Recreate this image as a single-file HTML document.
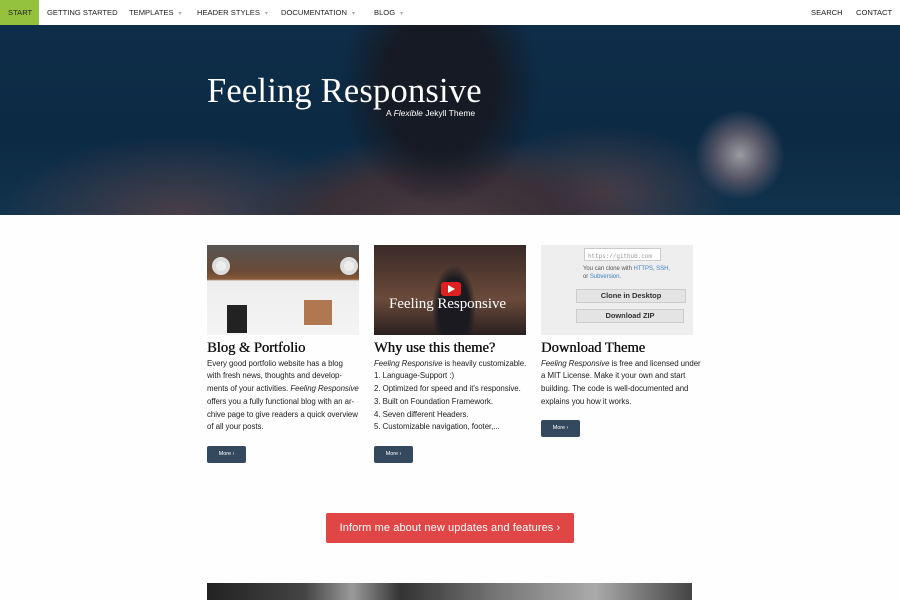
<!DOCTYPE html>
<html><head><meta charset="utf-8"><style>
*{margin:0;padding:0;box-sizing:border-box}
body{width:900px;height:600px;overflow:hidden;background:#fefefe;font-family:"Liberation Sans",sans-serif;color:#222;position:relative}
.nav{position:absolute;top:0;left:0;width:900px;height:25px;background:#fff;font-size:7.6px;}
.nav .it{position:absolute;top:8px;color:#222;white-space:nowrap}
.nav .start{left:0;top:0;width:39px;height:25px;background:#94c23c;padding:8px 0 0 8px}
.caret{color:#aaa;font-size:6px;margin-left:5px}
.hero{position:absolute;top:25px;left:0;width:900px;height:190px;overflow:hidden;
background:
radial-gradient(ellipse 100px 120px at 440px 60px,#161a24 55%,transparent 100%),
radial-gradient(ellipse 200px 90px at 440px 200px,#4a3a40 0%,#3a3038 60%,transparent 100%),
radial-gradient(ellipse 60px 60px at 740px 130px,#9a9aa0 0%,#556 40%,transparent 75%),
radial-gradient(ellipse 180px 80px at 180px 190px,#4a3e48 0%,transparent 100%),
radial-gradient(ellipse 130px 70px at 600px 170px,#4a3e48 0%,transparent 100%),
linear-gradient(#0e2d48,#0c2a44 60%,#11334d)}
.hero h1{position:absolute;left:207px;top:47px;font-family:"Liberation Serif",serif;font-weight:normal;font-size:34.5px;color:#fff;letter-spacing:0.2px}
.hero .sub{position:absolute;left:386px;top:83px;font-size:8.5px;color:#fff}
.card{position:absolute;top:245px;width:152px;font-size:7.9px;line-height:12.7px;letter-spacing:-0.05px}
.img{height:90px;width:152px}
.card h2{font-family:"Liberation Serif",serif;font-size:14.5px;font-weight:normal;text-shadow:0.4px 0 0 #111;margin:7px 0 3px;color:#111;letter-spacing:0}
.btn{display:inline-block;background:#34495e;color:#fff;font-size:5.5px;width:39px;height:17px;line-height:17px;text-align:center;border-radius:2px;position:absolute;left:0}
.red{position:absolute;left:326px;top:513px;width:248px;height:30px;background:#e04646;border-radius:2px;color:#fff;font-size:11px;text-align:center;line-height:30px;letter-spacing:0.1px}
.bottom{position:absolute;left:207px;top:583px;width:485px;height:17px;background:linear-gradient(90deg,#222 0%,#444 20%,#999 30%,#333 40%,#777 60%,#aaa 80%,#444 100%)}
</style></head><body>
<div class="nav">
<span class="it start">START</span>
<span class="it" style="left:47px">GETTING STARTED</span>
<span class="it" style="left:129px">TEMPLATES<span class="caret">▾</span></span>
<span class="it" style="left:197px">HEADER STYLES<span class="caret">▾</span></span>
<span class="it" style="left:281px">DOCUMENTATION<span class="caret">▾</span></span>
<span class="it" style="left:374px">BLOG<span class="caret">▾</span></span>
<span class="it" style="left:811px">SEARCH</span>
<span class="it" style="left:856px">CONTACT</span>
</div>
<div class="hero"><h1>Feeling Responsive</h1><div class="sub">A <i>Flexible</i> Jekyll Theme</div></div>

<div class="card" style="left:207px">
<div class="img" style="background:linear-gradient(180deg,#555 0%,#6b4a35 30%,#8a5a3a 38%,#eee 40%,#f4f4f4 100%);position:relative">
<div style="position:absolute;left:20px;top:60px;width:20px;height:28px;background:#222"></div>
<div style="position:absolute;left:97px;top:55px;width:28px;height:25px;background:#b07850"></div>
<div style="position:absolute;left:5px;top:12px;width:18px;height:18px;border-radius:50%;background:#eee;border:4px solid #ddd"></div>
<div style="position:absolute;left:133px;top:12px;width:18px;height:18px;border-radius:50%;background:#eee;border:4px solid #ddd"></div>
</div>
<h2>Blog &amp; Portfolio</h2>
<p>Every good portfolio website has a blog<br>with fresh news, thoughts and develop-<br>ments of your activities. <i>Feeling Responsive</i><br>offers you a fully functional blog with an ar-<br>chive page to give readers a quick overview<br>of all your posts.</p>
<span class="btn" style="top:201px">More ›</span>
</div>

<div class="card" style="left:374px">
<div class="img" style="background:radial-gradient(ellipse 22px 45px at 80px 65px,#1a1a20 70%,transparent 100%),linear-gradient(#3a2a28,#6a4a3a 60%,#2a2020);position:relative">
<div style="position:absolute;left:67px;top:37px;width:20px;height:14px;background:#e02020;border-radius:3px"></div>
<div style="position:absolute;left:74px;top:40px;width:0;height:0;border-left:7px solid #fff;border-top:4px solid transparent;border-bottom:4px solid transparent"></div>
<div style="position:absolute;left:15px;top:53px;color:#fff;font-family:'Liberation Serif',serif;font-size:15px">Feeling Responsive</div>
</div>
<h2>Why use this theme?</h2>
<p style="white-space:nowrap"><i>Feeling Responsive</i> is heavily customizable.<br>1. Language-Support :)<br>2. Optimized for speed and it's responsive.<br>3. Built on Foundation Framework.<br>4. Seven different Headers.<br>5. Customizable navigation, footer,...</p>
<span class="btn" style="top:201px">More ›</span>
</div>

<div class="card" style="left:541px">
<div class="img" style="background:#eee;position:relative;font-size:6px;color:#999">
<div style="position:absolute;left:43px;top:3px;width:77px;height:13px;background:#fff;border:1px solid #ccc;font-family:'Liberation Mono',monospace;padding:2px 3px">https://github.com</div>
<div style="position:absolute;left:42px;top:20px;color:#555;line-height:8px">You can clone with <span style="color:#4183c4">HTTPS, SSH,</span><br>or <span style="color:#4183c4">Subversion</span>.</div>
<div style="position:absolute;left:35px;top:44px;width:110px;height:14px;background:#e4e4e4;border:1px solid #ccc;color:#333;font-weight:bold;font-size:7.5px;text-align:center;line-height:12px">Clone in Desktop</div>
<div style="position:absolute;left:35px;top:64px;width:108px;height:14px;background:#e4e4e4;border:1px solid #ccc;color:#333;font-weight:bold;font-size:7.5px;text-align:center;line-height:12px">Download ZIP</div>
</div>
<h2>Download Theme</h2>
<p style="white-space:nowrap"><i>Feeling Responsive</i> is free and licensed under<br>a MIT License. Make it your own and start<br>building. The code is well-documented and<br>explains you how it works.</p>
<span class="btn" style="top:175px">More ›</span>
</div>

<div class="red">Inform me about new updates and features ›</div>
<div class="bottom"></div>
</body></html>
